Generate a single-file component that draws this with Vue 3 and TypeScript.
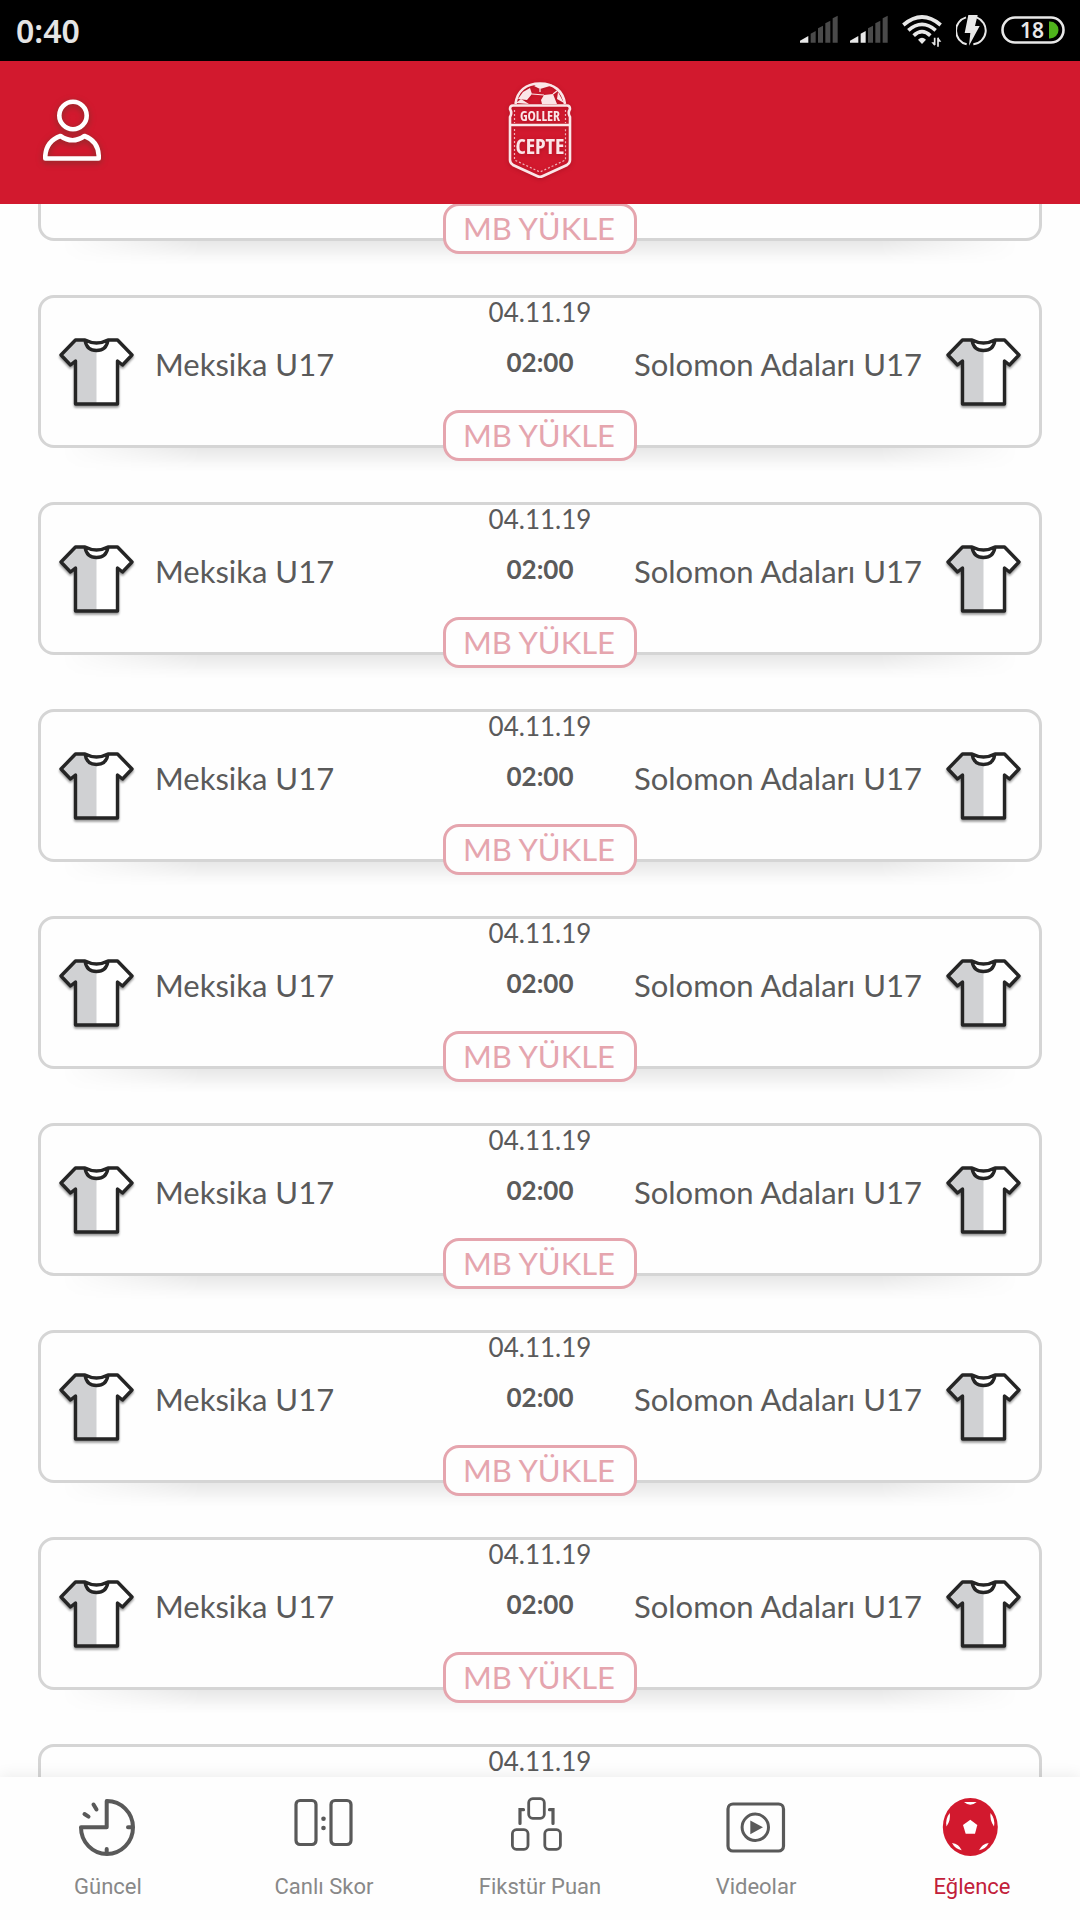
<script setup lang="ts">
interface Match {
  id: number
  home: string
  away: string
  date: string
  time: string
}

interface Tab {
  id: 'recent' | 'live' | 'fixtures' | 'videos' | 'fun'
  label: string
}

const matches: Match[] = Array.from({ length: 9 }, (_, i) => ({
  id: i,
  home: 'Meksika U17',
  away: 'Solomon Adaları U17',
  date: '04.11.19',
  time: '02:00',
}))

const tabs: Tab[] = [
  { id: 'recent', label: 'Güncel' },
  { id: 'live', label: 'Canlı Skor' },
  { id: 'fixtures', label: 'Fikstür Puan' },
  { id: 'videos', label: 'Videolar' },
  { id: 'fun', label: 'Eğlence' },
]

const activeTab: Tab['id'] = 'fun'

// Number of lit bars for each SIM
const signals: number[] = [1, 2]

const bars: string[] = [
  '0,83 0,77 25,63 25,83',
  '32,83 32,56 47,48 47,83',
  '54,83 54,40 69,32 69,83',
  '76,83 76,25 91,17 91,83',
  '98,83 98,10 113,2 113,83',
]
</script>

<template>
  <div class="app">
    <div class="status">
      <span class="clock">0:40</span>
      <div class="status-icons">
        <div class="signals">
          <svg v-for="level in signals" :key="level" width="38" height="32" viewBox="0 0 114 96">
            <polygon
              v-for="(points, i) in bars"
              :key="i"
              :points="points"
              :fill="i < level ? '#e8e8e8' : '#4a4a4a'"
            />
          </svg>
        </div>
        <svg width="40" height="32" viewBox="0 0 120 96" fill="none" stroke="#e8e8e8">
          <path d="M4 30Q60 -18 116 30" stroke-width="11" />
          <path d="M19 46Q60 10 101 46" stroke-width="11" />
          <path d="M35 62Q60 38 85 62" stroke-width="11" />
          <path d="M48 74Q60 62 72 74L60 87Z" fill="#e8e8e8" stroke="none" />
          <path d="M98 68V90M108 68V95" stroke-width="5" />
          <path d="M88 82L98 93V82ZM118 80L108 67V80Z" fill="#e8e8e8" stroke="none" />
        </svg>
        <svg width="31" height="32" viewBox="0 0 93 96" fill="none" stroke="#e8e8e8">
          <path d="M30 7A42 42 0 0 0 32 88M62 7A42 42 0 0 1 52 88" stroke-width="6" />
          <path d="M37 0H65L57 33H71L39 92L43 54H26Z" fill="#e8e8e8" stroke="none" />
        </svg>
        <svg width="64" height="32" viewBox="0 0 64 32">
          <rect x="1.500" y="2.500" width="61" height="25" rx="12.500" fill="none" stroke="#e8e8e8" stroke-width="2.600" />
          <path d="M48 6.500H49A8.500 8.500 0 0 1 49 23.500H48Z" fill="#4fb41c" />
          <text x="19" y="23" class="level">18</text>
        </svg>
      </div>
    </div>

    <header class="header">
      <button class="profile" type="button" aria-label="Profil">
        <svg width="66" height="72" viewBox="0 0 66 72" fill="none" stroke="#fff" stroke-width="4.600">
          <circle cx="33" cy="19.500" r="13.700" />
          <path d="M5.300 62.500V59.500Q6.500 45 20.500 40Q32.500 48.500 44.500 40Q58 45 58.700 59.500V62.500Z" stroke-linejoin="round" />
        </svg>
      </button>
      <svg class="logo" width="70" height="104" viewBox="0 0 70 104" fill="none" stroke="#fbe6e8">
        <path d="M10.500 29C12 16 21 8.500 35 8.500S58 16 60 29" stroke-width="2.600" />
        <path d="M29 11L35 14L45 11L47 9.500L34 8Z" fill="#fbe6e8" stroke="none" />
        <path d="M18 17L25 13L27 19L22 25L13 24ZM39 20L48 19L52 29H37L36 25Z" fill="#fbe6e8" stroke="none" />
        <path d="M11 28L16 24L24 29ZM53 17L59 28L52 24Z" fill="#fbe6e8" stroke="none" />
        <path d="M27 19L39 20M35 14V17M48 19L52 16" stroke-width="1.200" />
        <path d="M8 30.500H62Q65 30.500 65 34Q62.500 38 65 42V85Q65 88 62 90L38 101Q35 102.500 32 101L8 90Q5 88 5 85V42Q7.500 38 5 34Q5 30.500 8 30.500Z" stroke-width="2.600" />
        <path d="M5 50H65" stroke-width="2.600" />
        <path d="M9.500 35V48M60.500 35V48M9.500 54V85L35 97L60.500 85V54" stroke-width="1.200" stroke-dasharray="2 2" opacity=".75" />
        <text x="35" y="46" class="logo-small">GOLLER</text>
        <text x="35" y="79" class="logo-big">CEPTE</text>
      </svg>
    </header>

    <main class="content">
      <ul class="matches">
        <li v-for="match in matches" :key="match.id" class="match">
          <div class="team">
            <svg class="shirt" width="75" height="70" viewBox="0 0 75 70">
              <path d="M16.500 3H26Q37.500 8 49 3H58.500L73 18L63.500 28L58.500 24V67H16.500V24L11.500 28L2 18Z" fill="#fff" />
              <path d="M16.500 3H26Q27 14 37.500 14V67H16.500V24L11.500 28L2 18Z" fill="#d0d1d3" />
              <path d="M16.500 3H26Q37.500 9 49 3H58.500L73 18L63.500 28L58.500 24V67H16.500V24L11.500 28L2 18ZM26 3Q27.500 13.500 37.500 13.500T49 3" fill="none" stroke="#252525" stroke-width="3.400" stroke-linejoin="round" />
            </svg>
            <span class="name">{{ match.home }}</span>
          </div>
          <div class="kickoff">
            <span class="date">{{ match.date }}</span>
            <strong class="time">{{ match.time }}</strong>
          </div>
          <div class="team away">
            <span class="name">{{ match.away }}</span>
            <svg class="shirt" width="75" height="70" viewBox="0 0 75 70">
              <path d="M16.500 3H26Q37.500 8 49 3H58.500L73 18L63.500 28L58.500 24V67H16.500V24L11.500 28L2 18Z" fill="#fff" />
              <path d="M16.500 3H26Q27 14 37.500 14V67H16.500V24L11.500 28L2 18Z" fill="#d0d1d3" />
              <path d="M16.500 3H26Q37.500 9 49 3H58.500L73 18L63.500 28L58.500 24V67H16.500V24L11.500 28L2 18ZM26 3Q27.500 13.500 37.500 13.500T49 3" fill="none" stroke="#252525" stroke-width="3.400" stroke-linejoin="round" />
            </svg>
          </div>
          <button class="load" type="button">MB YÜKLE</button>
        </li>
      </ul>
    </main>

    <nav class="tabs">
      <a
        v-for="tab in tabs"
        :key="tab.id"
        href="#"
        class="tab"
        :class="{ active: tab.id === activeTab }"
        :aria-current="tab.id === activeTab ? 'page' : undefined"
      >
        <svg width="64" height="64" viewBox="0 0 64 64" fill="none" stroke="#595959" stroke-width="4">
          <g v-if="tab.id === 'recent'" stroke-linecap="round" stroke-linejoin="round">
            <path d="M30.700 5V31.300H5A26 26.500 0 1 0 30.700 5Z" />
            <path d="M52 31.300H56M30.700 53V57M17.500 8.500L20.500 13.500M8.500 18L12.500 20.600" />
          </g>
          <g v-else-if="tab.id === 'live'" stroke-width="3.200">
            <rect x="4" y="4.500" width="20" height="44" rx="4" />
            <rect x="39" y="4.500" width="20" height="44" rx="4" />
            <circle cx="31.500" cy="22.700" r="2.300" fill="#595959" stroke="none" />
            <circle cx="31.500" cy="32" r="2.300" fill="#595959" stroke="none" />
          </g>
          <g v-else-if="tab.id === 'fixtures'" stroke-width="2.800">
            <rect x="20.700" y="2.700" width="15.600" height="19.600" rx="4" />
            <rect x="4.400" y="33.700" width="15.600" height="19.600" rx="4" />
            <rect x="36.800" y="33.700" width="15.600" height="19.600" rx="4" />
            <path d="M15.500 13.700H12V27.500M41.500 13.700H45V27.500" stroke-width="3.200" stroke-linecap="round" />
          </g>
          <g v-else-if="tab.id === 'videos'" stroke-width="3.200">
            <rect x="4" y="8" width="55.500" height="47" rx="5" />
            <circle cx="31.300" cy="31.300" r="13.200" stroke-width="3" />
            <path d="M26.300 24.500L39 31.300L26.300 38.300Z" fill="#595959" stroke="none" />
          </g>
          <g v-else stroke="none">
            <ellipse cx="30.300" cy="31" rx="27.500" ry="29" fill="#d2192e" />
            <g fill="#fff">
              <path d="M30.300 23.700L37.300 29L35 37.700H25.700L23 29Z" />
              <path d="M24 6H36.700Q30.300 11.500 24 6ZM9.700 17Q5 23 6.500 30.500Q11 24 9.700 17ZM50.500 17Q49.500 24 54 30.500Q55.500 23 50.500 17ZM12 47Q19 48 21.700 54.300Q15 53 12 47ZM48.700 47Q42 48 39 54.300Q46 53 48.700 47Z" />
            </g>
          </g>
        </svg>
        <span class="tab-label">{{ tab.label }}</span>
      </a>
    </nav>
  </div>
</template>

<style>
body {
  background: #fefefe;
}
</style>

<style scoped>
.app {
  display: flex;
  flex-direction: column;
  height: 100vh;
  overflow: hidden;
  background: #fefefe;
  color: #5a5a5a;
  font-family: Lato, "Noto Sans", sans-serif;
}

.status {
  display: flex;
  flex: none;
  align-items: center;
  justify-content: space-between;
  height: 61px;
  padding: 0 15px 0 16px;
  background: #000;
}

.clock {
  color: #e5e5e5;
  font: 600 32px/60px "Noto Sans", sans-serif;
}

.status-icons {
  display: flex;
  align-items: center;
  gap: 14px;
}

.signals {
  display: flex;
  gap: 12px;
}

.level {
  fill: #e8e8e8;
  font: 600 21px "Noto Sans", sans-serif;
}

.header {
  position: relative;
  z-index: 1;
  display: grid;
  grid-template-columns: 1fr auto 1fr;
  flex: none;
  align-items: center;
  height: 143px;
  background: #d2192e;
}

.profile {
  justify-self: start;
  height: 72px;
  margin: 0 0 2px 40px;
  padding: 0;
  border: 0;
  background: none;
}

.profile svg {
  display: block;
  filter: drop-shadow(0 2px 3px rgba(80, 60, 40, 0.6));
}

.logo {
  margin-bottom: 11px;
  filter: drop-shadow(0 1px 2px rgba(80, 0, 10, 0.3));
}

.logo-small,
.logo-big {
  fill: #fbe6e8;
  stroke: none;
  font-family: "Liberation Sans Narrow", "Open Sans Condensed", "Roboto Condensed", Lato, sans-serif;
  font-weight: 700;
  text-anchor: middle;
}

.logo-small {
  font-size: 14px;
}

.logo-big {
  font-size: 22px;
}

.content {
  flex: 1;
  min-height: 0;
  overflow: hidden;
}

.matches {
  display: flex;
  flex-direction: column;
  gap: 54px;
  margin: -116px 0 0;
  padding: 0 38px;
  list-style: none;
}

.match {
  position: relative;
  display: grid;
  grid-template-columns: 1fr auto 1fr;
  box-sizing: border-box;
  height: 153px;
  padding: 0 18px;
  border: 3px solid #d5d5d5;
  border-radius: 16px;
}

.match::after {
  content: "";
  position: absolute;
  top: 100%;
  left: 20px;
  right: 20px;
  height: 24px;
  margin-top: 3px;
  background: linear-gradient(rgba(0, 0, 0, 0.09), rgba(0, 0, 0, 0.02) 70%, transparent);
  mask-image: linear-gradient(90deg, transparent, #000 140px, #000 calc(100% - 140px), transparent);
}

.team {
  display: flex;
  align-items: center;
  gap: 21px;
}

.away {
  justify-content: flex-end;
  gap: 24px;
}

.shirt {
  flex: none;
  filter: drop-shadow(0 2px 1px rgba(0, 0, 0, 0.4));
}

.name {
  padding-bottom: 15px;
  font-size: 31px;
  line-height: 40px;
  white-space: nowrap;
}

.kickoff {
  display: flex;
  flex-direction: column;
  align-items: center;
  gap: 22px;
  font-size: 26px;
  line-height: 28px;
}

.load {
  position: absolute;
  bottom: -16px;
  left: 50%;
  z-index: 1;
  box-sizing: border-box;
  width: 194px;
  height: 51px;
  padding: 0 2px 0 0;
  border: 3px solid #e5a5ae;
  border-radius: 16px;
  background: #fefefe;
  color: #e5a5ae;
  font: 31px/45px Lato, sans-serif;
  transform: translateX(-50%);
}

.tabs {
  position: relative;
  z-index: 1;
  display: grid;
  grid-template-columns: repeat(5, 1fr);
  flex: none;
  height: 143px;
  background: #fefefe;
  box-shadow: 0 -2px 14px rgba(0, 0, 0, 0.07);
}

.tab {
  display: flex;
  flex-direction: column;
  align-items: center;
  gap: 13px;
  padding-top: 19px;
  color: #888;
  text-decoration: none;
}

.tab-label {
  font: 22px/28px Roboto, sans-serif;
}

.active {
  color: #c2203a;
}
</style>
